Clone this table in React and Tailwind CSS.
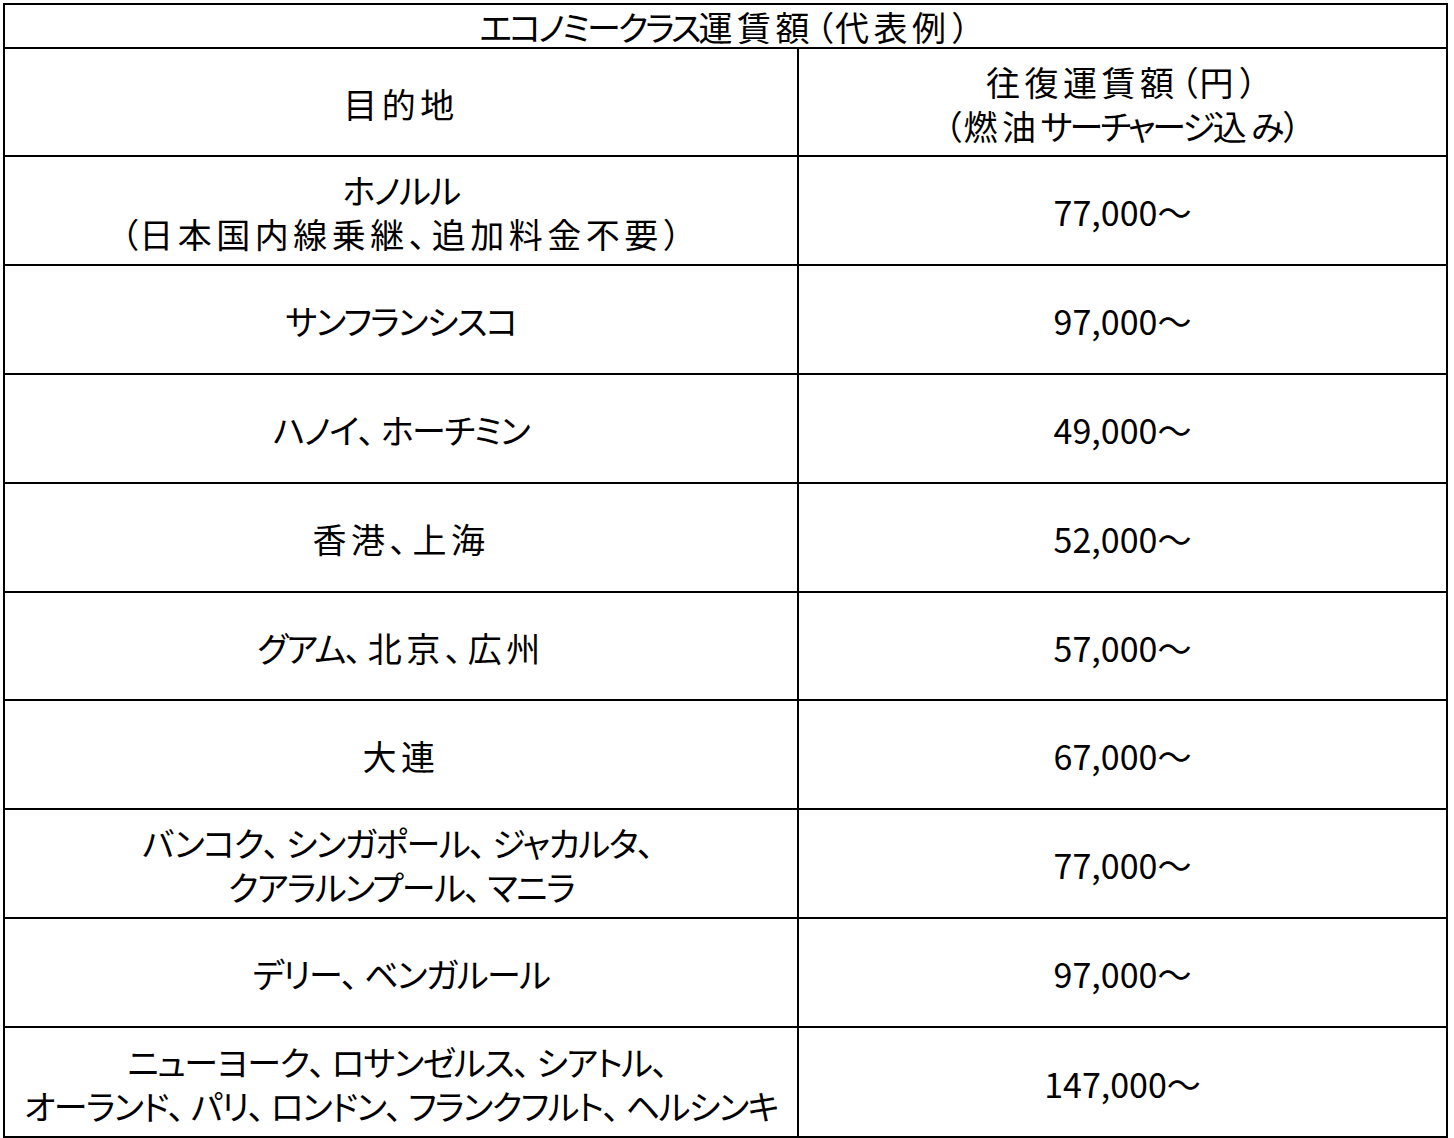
import React from 'react';

const rows = [
  { dest: ['ホノルル', '（日本国内線乗継、追加料金不要）'], fare: '77,000～' },
  { dest: ['サンフランシスコ'], fare: '97,000～' },
  { dest: ['ハノイ、ホーチミン'], fare: '49,000～' },
  { dest: ['香港、上海'], fare: '52,000～' },
  { dest: ['グアム、北京、広州'], fare: '57,000～' },
  { dest: ['大連'], fare: '67,000～' },
  { dest: ['バンコク、シンガポール、ジャカルタ、', 'クアラルンプール、マニラ'], fare: '77,000～' },
  { dest: ['デリー、ベンガルール'], fare: '97,000～' },
  { dest: ['ニューヨーク、ロサンゼルス、シアトル、', 'オーランド、パリ、ロンドン、フランクフルト、ヘルシンキ'], fare: '147,000～' },
];

// heights follow the sheet rows (some are a pixel shorter)
const rowH = ['h-[109px]', 'h-[109px]', 'h-[109px]', 'h-[109px]', 'h-[108px]', 'h-[109px]', 'h-[109px]', 'h-[109px]', 'h-[110px]'];

// the sheet font has narrow kana, loosely spaced kanji, wide parens in body cells
function JpText({ text, tight }) {
  const parts = [];
  let buf = '';
  let kind = null;
  const kindOf = (c) =>
    c === '、' ? 'c' : '（）'.includes(c) ? 'p' : /[\u30A0-\u30FF\u3040-\u309F]/.test(c) ? 'k' : /[\u4E00-\u9FFF]/.test(c) ? 'h' : 'o';
  for (const c of text) {
    const k = kindOf(c);
    if (k !== kind && buf) {
      parts.push([kind, buf]);
      buf = '';
    }
    kind = k;
    buf += c;
  }
  if (buf) parts.push([kind, buf]);
  return (
    <>
      {parts.map(([k, s], i) => {
        if (k === 'p') return <span key={i} className={tight ? 'px-[2px]' : '[font-feature-settings:normal]'}>{s}</span>;
        if (k === 'c') return <span key={i} className="tracking-[6px]">{s}</span>;
        if (k === 'k') return <span key={i} className={tight ? 'tracking-[-3px]' : 'tracking-[-1.5px]'}>{s}</span>;
        if (k === 'h') return <span key={i} className="tracking-[4.5px]">{s}</span>;
        return <span key={i}>{s}</span>;
      })}
    </>
  );
}

function App() {
  return (
    <div className="min-h-screen bg-white pt-[3px] pl-[3px] text-black font-['Noto_Sans_CJK_JP',sans-serif] text-[34px] leading-[44px] [font-feature-settings:'palt']">
      <table className="w-[1445px] border-collapse border-2 border-black table-fixed">
        <colgroup>
          <col className="w-[794px]" />
          <col />
        </colgroup>
        <tbody>
          <tr className="h-[44px]">
            <td colSpan={2} className="border-2 border-black text-center p-0 pt-[2px] leading-[40px]">
              <JpText text="エコノミークラス運賃額（代表例）" tight />
            </td>
          </tr>
          {/* header */}
          <tr className="h-[108px]">
            <td className="border-2 border-black text-center p-0 pt-[3px]"><JpText text="目的地" /></td>
            <td className="border-2 border-black text-center p-0 pt-[3px]">
              <div><JpText text="往復運賃額（円）" tight /></div>
              <div><JpText text="（燃油サーチャージ込み）" tight /></div>
            </td>
          </tr>
          {rows.map((r, i) => (
            <tr key={i} className={rowH[i]}>
              <td className="border-2 border-black text-center p-0 pt-[3px]">
                {r.dest.map((l, j) => <div key={j}><JpText text={l} /></div>)}
              </td>
              <td className="border-2 border-black text-center p-0 pt-[3px]">{r.fare}</td>
            </tr>
          ))}
        </tbody>
      </table>
    </div>
  );
}

export default App;
